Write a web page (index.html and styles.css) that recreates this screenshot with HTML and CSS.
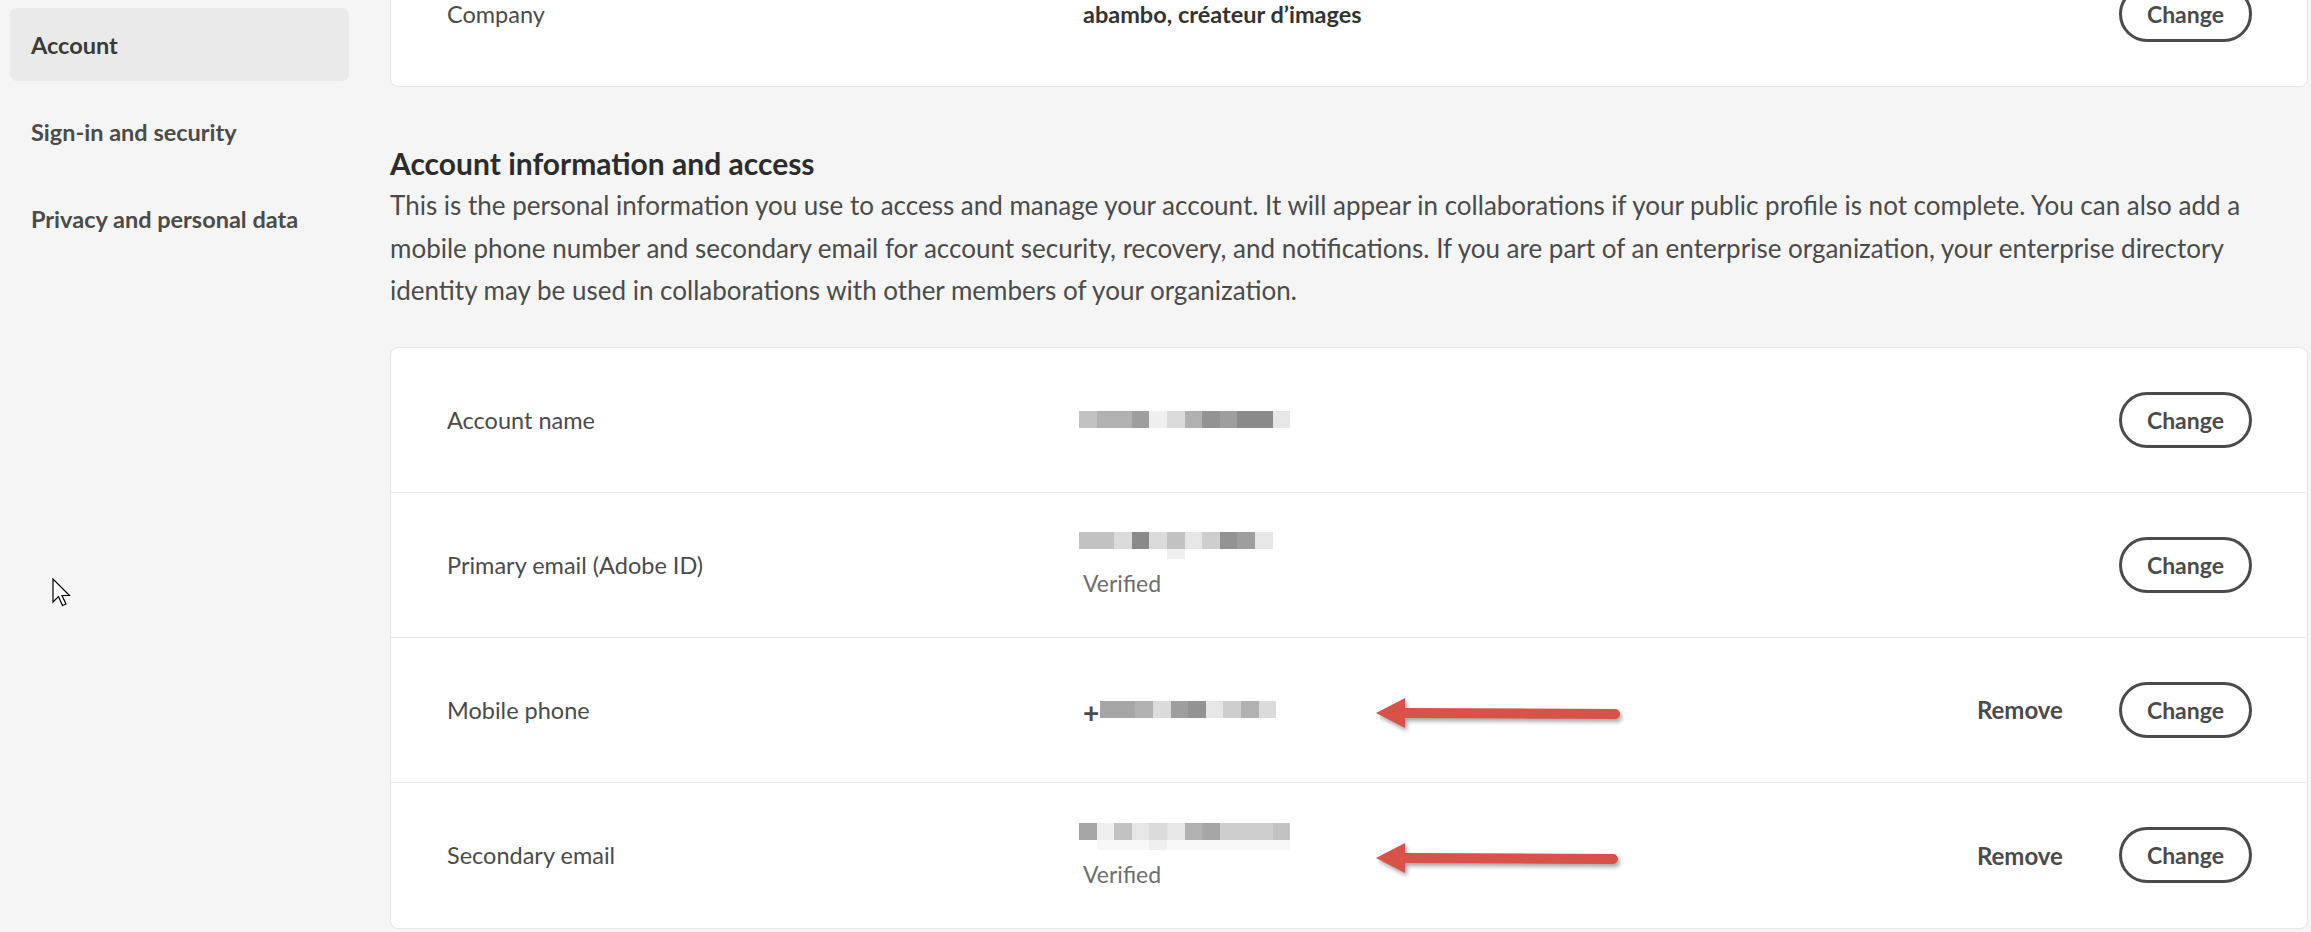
FILE: index.html
```html
<!DOCTYPE html>
<html lang="en">
<head>
    <meta charset="UTF-8">
    <meta name="viewport" content="width=device-width, initial-scale=1.0">
    <title>Account</title>
    <link rel="stylesheet" href="styles.css">
</head>
<body>
    <div class="page">
        <nav class="sidebar">
            <a class="nav-item active" href="#">Account</a>
            <a class="nav-item" href="#">Sign-in and security</a>
            <a class="nav-item" href="#">Privacy and personal data</a>
        </nav>

        <main class="content">
            <section class="card card-top">
                <div class="row">
                    <div class="label">Company</div>
                    <div class="value strong">abambo, créateur d’images</div>
                    <div class="actions"><button class="btn">Change</button></div>
                </div>
            </section>

            <section class="intro">
                <h2>Account information and access</h2>
                <p>This is the personal information you use to access and manage your account. It will appear in collaborations if your public profile is not complete. You can also add a mobile phone number and secondary email for account security, recovery, and notifications. If you are part of an enterprise organization, your enterprise directory identity may be used in collaborations with other members of your organization.</p>
            </section>

            <section class="card">
                <div class="row">
                    <div class="label">Account name</div>
                    <div class="value">
                        <div class="mosaic">
                            <span class="p6"></span><span class="p5"></span><span class="p5"></span><span class="p3"></span><span class="p10"></span><span class="p8"></span><span class="p5"></span><span class="p2"></span><span class="p3"></span><span class="p1"></span><span class="p1"></span><span class="p9"></span>
                        </div>
                    </div>
                    <div class="actions"><button class="btn">Change</button></div>
                </div>

                <div class="row">
                    <div class="label">Primary email (Adobe ID)</div>
                    <div class="value">
                        <div class="mosaic">
                            <span class="p6"></span><span class="p6"></span><span class="p8"></span><span class="p1"></span><span class="p8"></span><span class="p6"></span><span class="p9"></span><span class="p7"></span><span class="p2"></span><span class="p3"></span><span class="p9"></span>
                        </div>
                        <div class="mosaic faint">
                            <span></span><span></span><span></span><span></span><span></span><span class="p10"></span>
                        </div>
                        <div class="status">Verified</div>
                    </div>
                    <div class="actions"><button class="btn">Change</button></div>
                </div>

                <div class="row">
                    <div class="label">Mobile phone</div>
                    <div class="value">
                        <div class="mosaic phone">
                            <b>+</b><span class="p4"></span><span class="p4"></span><span class="p5"></span><span class="p8"></span><span class="p3"></span><span class="p2"></span><span class="p9"></span><span class="p7"></span><span class="p5"></span><span class="p8"></span>
                        </div>
                    </div>
                    <div class="actions">
                        <button class="link-btn">Remove</button>
                        <button class="btn">Change</button>
                    </div>
                    <svg class="arrow" width="252" height="40" viewBox="0 0 252 40">
                        <path d="M5 20 L34 5 L34 15 L244 16 A5 5 0 0 1 244 26 L34 25 L34 35 Z" fill="#d8524a"/>
                    </svg>
                </div>

                <div class="row">
                    <div class="label">Secondary email</div>
                    <div class="value">
                        <div class="mosaic">
                            <span class="p4"></span><span class="p10"></span><span class="p6"></span><span class="p9"></span><span class="p8"></span><span class="p9"></span><span class="p5"></span><span class="p4"></span><span class="p7"></span><span class="p7"></span><span class="p7"></span><span class="p6"></span>
                        </div>
                        <div class="mosaic faint">
                            <span></span><span class="p11"></span><span class="p11"></span><span class="p11"></span><span class="p10"></span><span class="p11"></span><span class="p11"></span><span class="p11"></span><span class="p11"></span><span class="p11"></span><span class="p11"></span><span class="p11"></span>
                        </div>
                        <div class="status">Verified</div>
                    </div>
                    <div class="actions">
                        <button class="link-btn">Remove</button>
                        <button class="btn">Change</button>
                    </div>
                    <svg class="arrow" width="252" height="40" viewBox="0 0 252 40">
                        <path d="M5 20 L34 5 L34 15 L242 16 A5 5 0 0 1 242 26 L34 25 L34 35 Z" fill="#d8524a"/>
                    </svg>
                </div>
            </section>
        </main>
    </div>

    <svg class="cursor" width="20" height="30" viewBox="0 0 20 30">
        <path d="M1 1 L1 24 L6.5 18.5 L10.5 27.5 L14 26 L10 17.5 L17.5 17.5 Z" fill="#fff" stroke="#000" stroke-width="1.2" stroke-linejoin="miter"/>
    </svg>
</body>
</html>
```

FILE: styles.css
```css
body {
    margin: 0;
    background-color: #f5f5f5;
    font-family: Lato, "Open Sans", Arial, sans-serif;
    color: #4b4b4b;
    overflow: hidden;
}
.page {
    display: flex;
    min-height: 100vh;
}
.sidebar {
    width: 339px;
    padding: 8px 0 0 10px;
    display: flex;
    flex-direction: column;
    gap: 14px;
    flex-shrink: 0;
}
.nav-item {
    display: flex;
    align-items: center;
    height: 73px;
    padding-left: 21px;
    border-radius: 7px;
    font-size: 23.5px;
    font-weight: 700;
    color: #4b4b4b;
    text-decoration: none;
}
.nav-item.active {
    background-color: #eaeaea;
    color: #3a3a3a;
}
.content {
    flex: 1;
    margin-left: 41px;
    margin-right: 3px;
}
.card {
    background-color: #fff;
    border: 1px solid #e6e6e6;
    border-radius: 8px;
}
.card-top {
    margin-top: -60px;
}
.row {
    position: relative;
    display: grid;
    grid-template-columns: 636px 1fr auto;
    align-items: center;
    height: 145px;
    box-sizing: border-box;
    padding: 0 55px 0 56px;
    border-bottom: 1px solid #e9e9e9;
}
.row:last-child {
    border-bottom: none;
}
.label {
    font-size: 23.5px;
}
.value {
    font-size: 23px;
}
.value.strong {
    font-size: 23.5px;
    font-weight: 700;
    color: #333;
}
.status {
    color: #6e6e6e;
    margin-top: 10px;
    line-height: 28px;
}
.actions {
    display: flex;
    align-items: center;
    gap: 56px;
}
.btn {
    height: 56px;
    padding: 0 25px;
    border: 3px solid #4b4b4b;
    border-radius: 28px;
    background-color: #fff;
    color: #4b4b4b;
    font-family: inherit;
    font-size: 23px;
    font-weight: 700;
    cursor: pointer;
}
.link-btn {
    border: none;
    background: none;
    padding: 0;
    color: #4b4b4b;
    font-family: inherit;
    font-size: 24px;
    font-weight: 700;
    cursor: pointer;
}
.intro {
    padding: 59px 0 35px;
}
.intro h2 {
    margin: 0;
    font-size: 30px;
    line-height: 34px;
    font-weight: 700;
    color: #2c2c2c;
}
.intro p {
    margin: 4px 0 0;
    font-size: 26px;
    line-height: 42.5px;
}

/* redacted values */
.mosaic {
    display: flex;
    height: 17px;
    margin-left: -4px;
}
.mosaic span {
    width: 17.6px;
    height: 100%;
}
.mosaic.faint {
    height: 10px;
}
.mosaic.phone {
    margin-left: 0;
}
.mosaic.phone b {
    font-weight: 700;
    font-size: 28px;
    line-height: 17px;
    margin-top: 3px;
    margin-right: 1px;
    color: #4b4b4b;
}
.p1 { background-color: #8a8a8a; }
.p2 { background-color: #939393; }
.p3 { background-color: #9e9e9e; }
.p4 { background-color: #a6a6a6; }
.p5 { background-color: #b1b1b1; }
.p6 { background-color: #c2c2c2; }
.p7 { background-color: #cecece; }
.p8 { background-color: #dbdbdb; }
.p9 { background-color: #e6e6e6; }
.p10 { background-color: #efefef; }
.p11 { background-color: #f8f8f8; }

.arrow {
    position: absolute;
    left: 980px;
    top: 55px;
    filter: drop-shadow(2px 3px 2px rgba(0, 0, 0, 0.35));
}
.cursor {
    position: absolute;
    left: 52px;
    top: 578px;
}
```
